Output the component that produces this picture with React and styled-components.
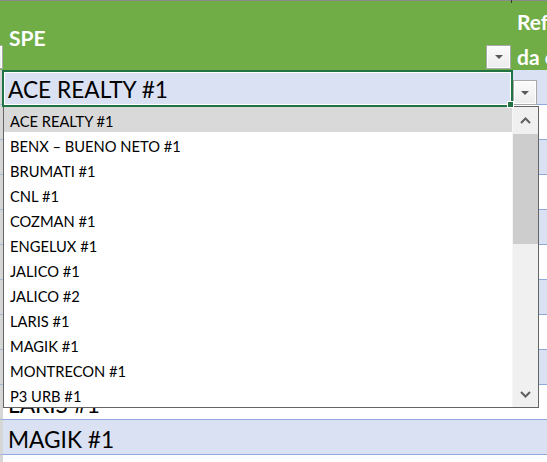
import React from "react";
import styled, { createGlobalStyle } from "styled-components";

const GlobalStyle = createGlobalStyle`
  html, body { margin: 0; padding: 0; background: #fff; overflow: hidden; }
  body { font-family: Lato, "Liberation Sans", sans-serif; }
  #root { width: 547px; height: 462px; }
`;

const Sheet = styled.div`
  position: relative;
  width: 547px;
  height: 462px;
  overflow: hidden;
  background: #fff;
`;

const TopRule = styled.div`
  height: 1px;
  background: #8a8a8a;
`;

const Tick = styled.div`
  position: absolute;
  left: 511px;
  top: 0;
  width: 1px;
  height: 3px;
  background: #3a3a3a;
`;

const Grid = styled.div`
  display: grid;
  grid-template-columns: 3px 509px 35px;
  grid-template-rows: 69px;
  grid-auto-rows: 35px;
`;

const HeaderCell = styled.div`
  background: #70ad47;
  color: #fff;
  font-weight: 700;
  font-size: 21px;
  display: flex;
  overflow: hidden;
  min-width: 0;
`;

const StubHeader = styled(HeaderCell)`
  justify-content: flex-end;
  align-items: flex-end;
  padding-bottom: 1px;
  box-sizing: border-box;
`;

const TitleHeader = styled(HeaderCell)`
  justify-content: space-between;
  align-items: flex-start;
  padding: 0 1px 1px 6px;
  box-sizing: border-box;
`;

const Title = styled.div`
  padding-top: 24px;
  line-height: 25px;
`;

const WrapHeader = styled(HeaderCell)`
  flex-direction: column;
  padding: 3px 0 0 5px;
  line-height: 35px;
  white-space: nowrap;
  box-sizing: border-box;
`;

const FilterButton = styled.div`
  flex-shrink: 0;
  align-self: flex-end;
  width: ${(p) => p.$w || 25}px;
  height: ${(p) => p.$h || 24}px;
  box-sizing: border-box;
  border: 1px solid #a9a9a9;
  background: linear-gradient(#fbfbfb, #ececec);
  box-shadow: inset 0 0 0 1px #fff;
  display: flex;
  align-items: center;
  justify-content: center;
`;

const CellButton = styled(FilterButton)`
  position: absolute;
  left: 513px;
  top: 80px;
`;

const LeftCell = styled.div`
  background: #d6d6d6;
  border-bottom: 1px solid #a9b8d6;
  box-sizing: border-box;
`;

const MainCell = styled.div`
  background: ${(p) => (p.$band ? "#D9E1F2" : "#fff")};
  border-bottom: 1px solid #8ea9db;
  box-sizing: border-box;
  font-size: 22.7px;
  line-height: 34px;
  padding: 3px 0 0 5px;
  white-space: nowrap;
  overflow: hidden;
  color: #000;
`;

const SideCell = styled.div`
  background: ${(p) => (p.$band ? "#D9E1F2" : "#fff")};
  border-bottom: 1px solid #8ea9db;
  box-sizing: border-box;
`;

const ActiveFrame = styled.div`
  position: absolute;
  left: 2px;
  top: 70px;
  width: 511px;
  height: 37px;
  box-sizing: border-box;
  border: 2px solid #217346;
  box-shadow: inset 0 0 0 1px #fff;
  pointer-events: none;
`;

const FillHandle = styled.div`
  position: absolute;
  left: 507px;
  top: 101px;
  width: 7px;
  height: 7px;
  box-sizing: border-box;
  background: #217346;
  border: 1px solid #fff;
`;

const DropdownList = styled.div`
  position: absolute;
  left: 3px;
  top: 106px;
  width: 536px;
  height: 302px;
  box-sizing: border-box;
  border: 1px solid #646464;
  background: #fff;
  display: flex;
`;

const Items = styled.ul`
  list-style: none;
  margin: 0;
  padding: 0;
  width: 508px;
  border-right: 1px solid #f6f6f6;
`;

const Item = styled.li`
  height: 25px;
  box-sizing: border-box;
  padding: 3px 0 0 6px;
  line-height: 22px;
  font-size: 14.7px;
  color: #000;
  white-space: nowrap;
  background: ${(p) => (p.$selected ? "#D9D9D9" : "transparent")};
`;

const Scrollbar = styled.div`
  width: 25px;
  background: #f0f0f0;
  display: flex;
  flex-direction: column;
`;

const ScrollArrow = styled.div`
  height: ${(p) => p.$h}px;
  display: flex;
  align-items: center;
  justify-content: center;
`;

const Thumb = styled.div`
  height: 110px;
  background: #cdcdcd;
`;

const Spacer = styled.div`
  flex: 1;
`;

const Caret = () => (
  <svg width="8" height="4" viewBox="0 0 8 4">
    <polygon points="0,0 8,0 4,4" fill="#595959" />
  </svg>
);

const Chevron = ({ up }) => (
  <svg width="11" height="7" viewBox="0 0 11 7">
    <polyline
      points={up ? "1,6 5.5,1.5 10,6" : "1,1 5.5,5.5 10,1"}
      fill="none"
      stroke="#606060"
      strokeWidth="2"
    />
  </svg>
);

const options = [
  "ACE REALTY #1",
  "BENX – BUENO NETO #1",
  "BRUMATI #1",
  "CNL #1",
  "COZMAN #1",
  "ENGELUX #1",
  "JALICO #1",
  "JALICO #2",
  "LARIS #1",
  "MAGIK #1",
  "MONTRECON #1",
  "P3 URB #1",
];

// Rows 2–9 sit fully under the open list, row 12 starts below the window.
const rows = [
  "ACE REALTY #1",
  "",
  "",
  "",
  "",
  "",
  "",
  "",
  "",
  "LARIS #1",
  "MAGIK #1",
  "",
];

export default function App() {
  return (
    <Sheet>
      <GlobalStyle />
      <TopRule />
      <Grid>
        <StubHeader>
          <FilterButton>
            <Caret />
          </FilterButton>
        </StubHeader>
        <TitleHeader>
          <Title>SPE</Title>
          <FilterButton>
            <Caret />
          </FilterButton>
        </TitleHeader>
        <WrapHeader>
          <span>Referência</span>
          <span>da operação</span>
        </WrapHeader>
        {rows.map((r, i) => (
          <React.Fragment key={i}>
            <LeftCell />
            <MainCell $band={i % 2 === 0}>{r}</MainCell>
            <SideCell $band={i % 2 === 0} />
          </React.Fragment>
        ))}
      </Grid>
      <Tick />
      <CellButton $w={24} $h={25}>
        <Caret />
      </CellButton>
      <DropdownList>
        <Items>
          {options.map((o, i) => (
            <Item key={o} $selected={i === 0}>
              {o}
            </Item>
          ))}
        </Items>
        <Scrollbar>
          <ScrollArrow $h={27}>
            <Chevron up />
          </ScrollArrow>
          <Thumb />
          <Spacer />
          <ScrollArrow $h={26}>
            <Chevron />
          </ScrollArrow>
        </Scrollbar>
      </DropdownList>
      <ActiveFrame />
      <FillHandle />
    </Sheet>
  );
}
